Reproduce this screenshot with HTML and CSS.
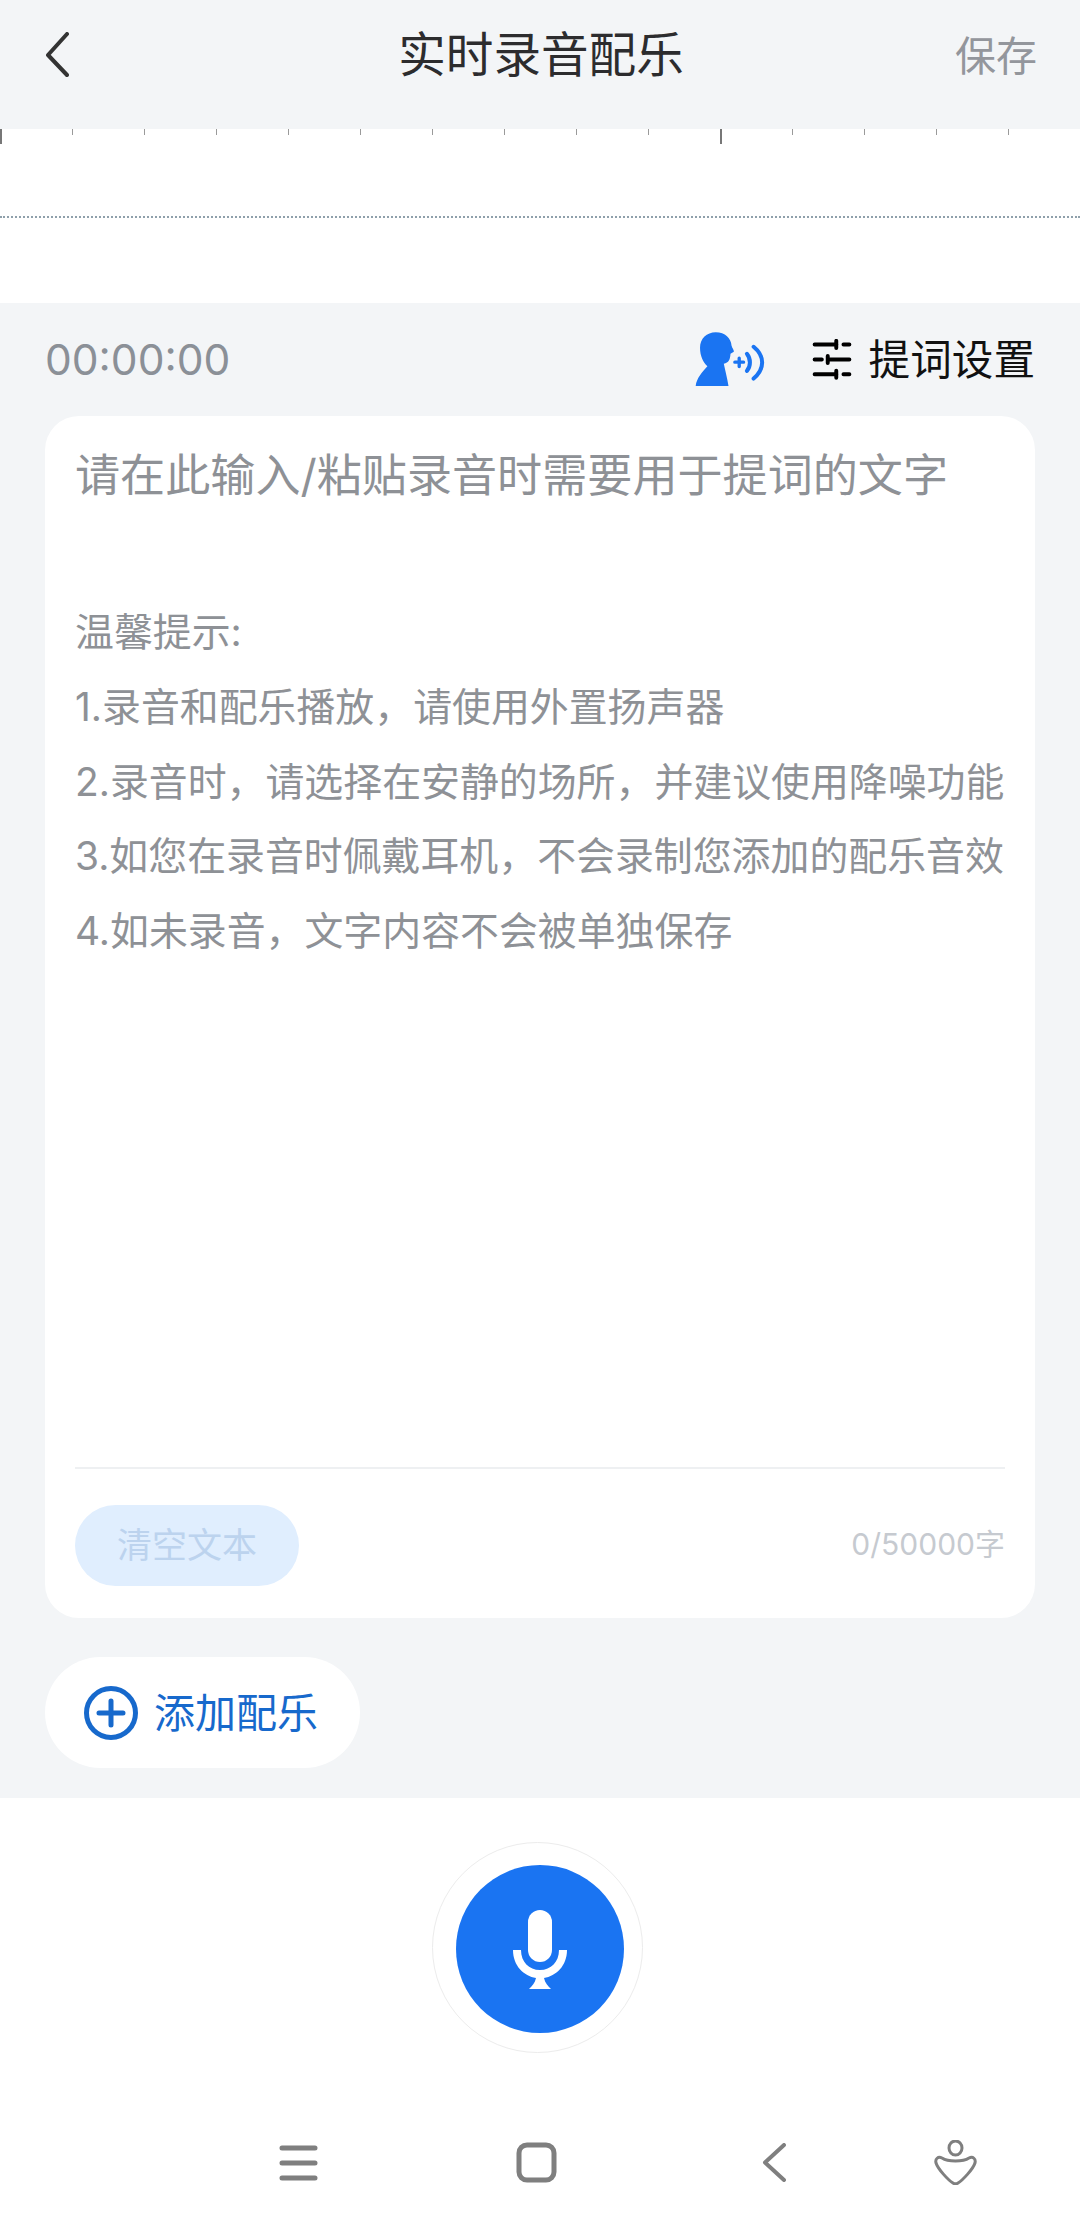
FILE: index.html
```html
<!DOCTYPE html>
<html lang="zh-CN">

<head>
    <meta charset="UTF-8">
    <title>实时录音配乐</title>
    <link rel="stylesheet" href="styles.css">
</head>

<body>
    <header class="top-bar">
        <svg class="back-icon" viewBox="0 0 24 45"><path d="M22 2 L3 23 L22 43" /></svg>
        <div class="title">实时录音配乐</div>
        <div class="save">保存</div>
    </header>

    <section class="track">
        <div class="ruler">
            <span class="tick major"></span><span class="tick"></span><span class="tick"></span><span class="tick"></span><span class="tick"></span>
            <span class="tick"></span><span class="tick"></span><span class="tick"></span><span class="tick"></span><span class="tick"></span>
            <span class="tick major"></span><span class="tick"></span><span class="tick"></span><span class="tick"></span><span class="tick"></span>
        </div>
        <div class="dotted"></div>
    </section>

    <main class="content">
        <div class="tools">
            <div class="time">00:00:00</div>
            <svg class="voice-icon" viewBox="100 65 215 170">
                <path class="voice-fill" d="M165 69 C193 69 211 88 212 108 C214 116 220 122 219 127 L209 133 C208 150 204 160 189 163 C193 182 199 205 203 229 L105 229 C108 205 124 188 140 170 C128 160 118 140 118 115 C118 88 138 69 165 69 Z" />
                <path class="voice-line thin" d="M222 158 H248 M235 146 V171" />
                <path class="voice-line" d="M258 133 C270 148 270 170 258 184" />
                <path class="voice-line" d="M278 112 C312 140 312 178 278 207" />
            </svg>
            <svg class="slider-icon" viewBox="450 88 122 124">
                <path d="M458 104 H524 M546 104 H564 M458 150 H480 M500 150 H564 M458 195 H524 M546 195 H564" />
                <path d="M524 93 V115 M498 139 V161 M524 184 V206" />
            </svg>
            <div class="tools-label">提词设置</div>
        </div>

        <div class="card">
            <div class="prompt">
                <div class="placeholder">请在此输入/粘贴录音时需要用于提词的文字</div>
                <div class="hints">
                    <p>温馨提示:</p>
                    <p>1.录音和配乐播放，请使用外置扬声器</p>
                    <p>2.录音时，请选择在安静的场所，并建议使用降噪功能</p>
                    <p>3.如您在录音时佩戴耳机，不会录制您添加的配乐音效</p>
                    <p>4.如未录音，文字内容不会被单独保存</p>
                </div>
            </div>
            <div class="card-foot">
                <div class="clear-btn">清空文本</div>
                <div class="count">0/50000字</div>
            </div>
        </div>

        <div class="add-music">
            <svg class="plus-icon" viewBox="0 0 54 54">
                <circle cx="27" cy="27" r="24.5" />
                <path d="M15 27 H39 M27 15 V39" />
            </svg>
            <span class="add-label">添加配乐</span>
        </div>
    </main>

    <section class="record">
        <div class="mic-ring">
            <div class="mic-btn">
                <svg class="mic-icon" viewBox="0 0 54 79">
                    <rect x="15" y="0" width="24" height="52" rx="12" />
                    <path d="M0 40 H8 C8 52 16 60 27 60 C38 60 46 52 46 40 H54 C54 56 43 66 31 68 C32 73 35 76 38 79 H16 C19 76 22 73 23 68 C11 66 0 56 0 40 Z" />
                </svg>
            </div>
        </div>
    </section>

    <nav class="sys-nav">
        <svg class="nav-menu" viewBox="0 0 39 36"><path d="M3 3 H36 M3 18 H36 M3 33 H36" /></svg>
        <svg class="nav-home" viewBox="0 0 41 41"><rect x="3" y="3" width="35" height="35" rx="8" /></svg>
        <svg class="nav-back" viewBox="0 0 25 39"><path d="M23 2 L4 19.5 L23 37" /></svg>
        <svg class="nav-person" viewBox="0 0 43 45">
            <ellipse cx="21.5" cy="8" rx="6.5" ry="7" />
            <path d="M8 18 C14 22 29 22 35 18 C39 16 42 19 41 23 C39 29 29 40 24 43 C22.5 44 20.5 44 19 43 C14 40 4 29 2 23 C1 19 4 16 8 18 Z" />
        </svg>
    </nav>
</body>

</html>
```

FILE: styles.css
```css
* {
    box-sizing: border-box;
}

body {
    margin: 0;
    height: 2229px;
    overflow: hidden;
    background: #fff;
    font-family: Inter, "Noto Sans CJK SC", sans-serif;
}

p {
    margin: 0;
}

svg {
    display: block;
    flex: none;
    fill: none;
}

/* top bar */
.top-bar {
    height: 129px;
    padding: 0 43px 21px 45px;
    background: #f3f5f7;
    display: grid;
    grid-template-columns: 1fr auto 1fr;
    align-items: center;
}

.back-icon {
    width: 24px;
    height: 45px;
    stroke: #333;
    stroke-width: 4;
    stroke-linecap: round;
    stroke-linejoin: round;
}

.title {
    font-size: 47.6px;
    color: #2c2c2e;
    padding-bottom: 6px;
}

.save {
    justify-self: end;
    font-size: 41px;
    color: #93969c;
    padding-bottom: 3px;
}

/* ruler and wave area */
.track {
    height: 174px;
    background: #fff;
}

.ruler {
    display: flex;
    height: 15px;
}

.tick {
    width: 72px;
    height: 6px;
    border-left: 1px solid #9a9a9a;
}

.tick.major {
    height: 15px;
    border-left: 2px solid #777;
}

.dotted {
    margin-top: 72px;
    border-top: 2px dotted #8fa0ab;
}

/* main grey part */
.content {
    height: 1495px;
    background: #f3f5f7;
    padding: 0 45px;
}

.tools {
    height: 113px;
    display: flex;
    align-items: center;
}

.time {
    font-size: 42.5px;
    color: #8b9097;
    margin-right: auto;
}

.voice-icon {
    width: 72px;
    height: 57px;
    margin-right: 46px;
}

.voice-fill {
    fill: #1a74f2;
}

.voice-line {
    stroke: #1a74f2;
    stroke-width: 12;
    stroke-linecap: round;
}

.voice-line.thin {
    stroke-width: 10;
}

.slider-icon {
    width: 40px;
    height: 41px;
    margin-right: 17px;
    stroke: #000;
    stroke-width: 12;
    stroke-linecap: round;
}

.tools-label {
    font-size: 41.6px;
    color: #111;
    padding-bottom: 6px;
}

.card {
    height: 1202px;
    background: #fff;
    border-radius: 34px;
    padding: 22px 30px 32px;
    display: flex;
    flex-direction: column;
}

.prompt {
    flex: 1;
    white-space: nowrap;
}

.placeholder {
    font-size: 45.1px;
    line-height: 75px;
    color: #8e9196;
}

.hints {
    margin-top: 82px;
    font-size: 38.9px;
    line-height: 74.8px;
    color: #8e9196;
}

.card-foot {
    border-top: 2px solid #eef0f2;
    padding-top: 36px;
    display: flex;
    justify-content: space-between;
    align-items: center;
}

.clear-btn {
    width: 224px;
    height: 81px;
    padding-bottom: 6px;
    border-radius: 41px;
    background: #e0eefe;
    color: #bcd3ee;
    font-size: 35px;
    display: flex;
    align-items: center;
    justify-content: center;
}

.count {
    font-size: 30px;
    color: #c6cad0;
    padding-bottom: 8px;
}

.add-music {
    width: 315px;
    height: 111px;
    margin-top: 39px;
    padding-left: 39px;
    border-radius: 56px;
    background: #fff;
    display: flex;
    align-items: center;
    gap: 16px;
    font-size: 41px;
    color: #1769cc;
}

.add-label {
    padding-bottom: 6px;
}

.plus-icon {
    width: 54px;
    height: 54px;
    stroke: #1769cc;
}

.plus-icon circle {
    stroke-width: 5;
}

.plus-icon path {
    stroke-width: 5;
    stroke-linecap: round;
}

/* record button */
.record {
    height: 301px;
    padding: 44px 0 0 432px;
}

.mic-ring {
    width: 211px;
    height: 211px;
    padding: 22px 0 0 23px;
    border: 1px solid #ececec;
    border-radius: 50%;
}

.mic-btn {
    width: 168px;
    height: 168px;
    border-radius: 50%;
    background: #1a74f2;
    display: flex;
    align-items: center;
    justify-content: center;
}

.mic-icon {
    width: 54px;
    height: 79px;
    fill: #fff;
}

/* android nav */
.sys-nav {
    display: flex;
    align-items: center;
    height: 45px;
    margin-top: 41px;
    padding-left: 279px;
}

.nav-menu {
    width: 39px;
    height: 36px;
    stroke: #7f7f7f;
    stroke-width: 5;
    stroke-linecap: round;
}

.nav-home {
    width: 41px;
    height: 41px;
    margin-left: 198px;
    stroke: #7f7f7f;
    stroke-width: 5;
}

.nav-back {
    width: 25px;
    height: 39px;
    margin-left: 204px;
    stroke: #7f7f7f;
    stroke-width: 4;
    stroke-linecap: round;
    stroke-linejoin: round;
}

.nav-person {
    width: 43px;
    height: 45px;
    margin-left: 148px;
    stroke: #7f7f7f;
    stroke-width: 3;
}
```
